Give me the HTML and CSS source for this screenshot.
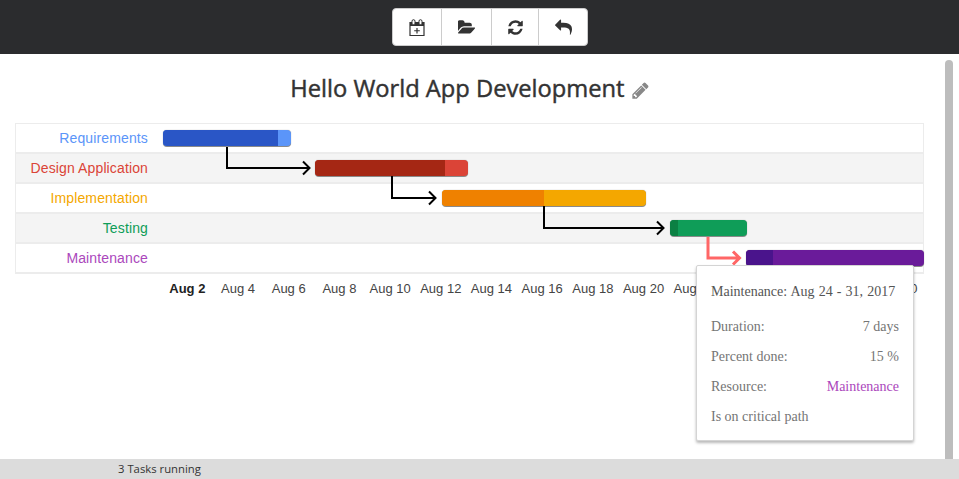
FILE: index.html
```html
<!DOCTYPE html>
<html lang="en">
<head>
<meta charset="utf-8">
<title>Hello World App Development</title>
<link rel="stylesheet" href="styles.css">
</head>
<body>
<header class="toolbar">
  <div class="btn-group">
    <button class="btn btn-a" aria-label="New task">
      <svg class="ico" width="16" height="17" viewBox="0 0 16 17"><path class="cal" d="M1 3.500h14v13h-14z M8 9v5.500 M5.200 11.750h5.600"/><path d="M1 4h14v3h-14z"/><rect class="ring" x="3" y=".7" width="3" height="5" rx="1.500"/><rect class="ring" x="10" y=".7" width="3" height="5" rx="1.500"/></svg>
    </button>
    <button class="btn btn-b" aria-label="Open">
      <svg class="ico" width="18" height="17" viewBox="0 0 1920 1792"><path d="M1815 952q0 31-31 66l-336 396q-43 51-120.500 86.500t-143.500 35.500h-1088q-34 0-60.500-13t-26.500-43q0-31 31-66l336-396q43-51 120.500-86.500t143.500-35.500h1088q34 0 60.500 13t26.500 43zm-343-344v160h-832q-94 0-197 47.500t-164 119.500l-337 396-5 6q0-4-.5-12.500t-.5-12.500v-960q0-92 66-158t158-66h320q92 0 158 66t66 158v32h544q92 0 158 66t66 158z"/></svg>
    </button>
    <button class="btn btn-c" aria-label="Refresh">
      <svg class="ico" width="17" height="17" viewBox="0 0 1792 1792"><path d="M1639 1056q0 5-1 7-64 268-268 434.500t-478 166.500q-146 0-282.500-55t-243.500-157l-129 129q-19 19-45 19t-45-19-19-45v-448q0-26 19-45t45-19h448q26 0 45 19t19 45-19 45l-137 137q71 66 161 102t187 36q134 0 250-65t186-179q11-17 53-117 8-23 30-23h192q13 0 22.500 9.500t9.500 22.500zm25-800v448q0 26-19 45t-45 19h-448q-26 0-45-19t-19-45 19-45l138-138q-148-137-349-137-134 0-250 65t-186 179q-11 17-53 117-8 23-30 23h-199q-13 0-22.500-9.500t-9.500-22.500v-7q65-268 270-434.500t480-166.500q146 0 284 55.500t245 156.500l130-129q19-19 45-19t45 19 19 45z"/></svg>
    </button>
    <button class="btn btn-d" aria-label="Undo">
      <svg class="ico" width="17" height="17" viewBox="0 0 1792 1792"><path d="M1792 1120q0 166-127 451-3 7-10.500 24t-13.500 30-13 22q-12 17-28 17-15 0-23.500-10t-8.500-25q0-9 2.500-26.500t2.500-23.500q5-68 5-123 0-101-17.500-181t-48.500-138.500-80-101-105.500-69.500-133-42.500-154-21.500-175.500-6h-224v256q0 26-19 45t-45 19-45-19l-512-512q-19-19-19-45t19-45l512-512q19-19 45-19t45 19 19 45v256h224q713 0 875 403 53 134 53 333z"/></svg>
    </button>
  </div>
</header>

<main class="content">
  <h1 class="title">Hello World App Development
    <svg class="pencil" width="19" height="19" viewBox="0 0 1792 1792"><path d="M491 1536l91-91-235-235-91 91v107h128v128h107zm523-928q0-22-22-22-10 0-17 7l-542 542q-7 7-7 17 0 22 22 22 10 0 17-7l542-542q7-7 7-17zm-54-192l416 416-832 832h-416v-416zm683 96q0 53-37 90l-166 166-416-416 166-165q36-38 90-38 53 0 91 38l235 234q37 39 37 91z"/></svg>
  </h1>

  <section class="gantt">
    <div class="rows">
      <div class="row"><span class="label c-blue">Requirements</span></div>
      <div class="row alt"><span class="label c-red">Design Application</span></div>
      <div class="row"><span class="label c-orange">Implementation</span></div>
      <div class="row alt"><span class="label c-green">Testing</span></div>
      <div class="row"><span class="label c-purple">Maintenance</span></div>
    </div>
    <div class="axis">
      <span class="tick strong">Aug 2</span><span class="tick">Aug 4</span><span class="tick">Aug 6</span><span class="tick">Aug 8</span><span class="tick">Aug 10</span><span class="tick">Aug 12</span><span class="tick">Aug 14</span><span class="tick">Aug 16</span><span class="tick">Aug 18</span><span class="tick">Aug 20</span><span class="tick">Aug 22</span><span class="tick">Aug 24</span><span class="tick">Aug 26</span><span class="tick">Aug 28</span><span class="tick">Aug 30</span>
    </div>

    <div class="bar bar-req"><div class="fill"></div></div>
    <div class="bar bar-des"><div class="fill"></div></div>
    <div class="bar bar-imp"><div class="fill"></div></div>
    <div class="bar bar-tst"><div class="fill"></div></div>
    <div class="bar bar-mnt"><div class="fill"></div></div>

    <svg class="links" width="909" height="150" viewBox="15 123 909 150">
      <path class="link" d="M227 147V168H309M303 161.500L309.500 168L303 174.500"/>
      <path class="link" d="M392 176V198H435M429 191.500L435.500 198L429 204.500"/>
      <path class="link" d="M544 206V228H663M657 221.500L663.500 228L657 234.500"/>
      <path class="link hot" d="M708 237V258H739M733 251.500L739.500 258L733 264.500"/>
    </svg>
  </section>

  <aside class="tooltip">
    <div class="tip-title">Maintenance: Aug 24 - 31, 2017</div>
    <div class="tip-row"><span>Duration:</span><span>7 days</span></div>
    <div class="tip-row"><span>Percent done:</span><span>15 %</span></div>
    <div class="tip-row"><span>Resource:</span><span class="c-purple">Maintenance</span></div>
    <div class="tip-row"><span>Is on critical path</span></div>
  </aside>

  <div class="scrollbar"></div>
</main>

<footer class="status"><span>3 Tasks running</span></footer>
</body>
</html>
```
FILE: styles.css
```css
* { box-sizing: border-box; }
html, body { height: 100%; }
body {
  margin: 0;
  display: flex;
  flex-direction: column;
  overflow: hidden;
  background: #fff;
  font-family: "Liberation Sans", Arial, sans-serif;
}
.toolbar {
  height: 54px;
  flex: none;
  background: #2b2c2e;
  display: flex;
  justify-content: center;
  padding: 8px 0 0 21px;
}
.btn-group {
  display: flex;
  height: 38px;
  background: #fff;
  border: 1px solid #ccc;
  border-radius: 4px;
}
.btn {
  display: flex;
  align-items: center;
  justify-content: center;
  padding: 0;
  border: 0;
  border-right: 1px solid #ccc;
  background: transparent;
  height: 36px;
}
.btn:last-child { border-right: 0; }
.btn-a { width: 49px; }
.btn-b { width: 50px; }
.btn-c { width: 47px; }
.btn-d { width: 48px; }
.ico { fill: #333; display: block; }
.cal { fill: none; stroke: #333; stroke-width: 1.200; }
.ring { fill: #fff; stroke: #333; stroke-width: 1; }
.content {
  flex: 1;
  position: relative;
  padding: 0 35px 0 15px;
  min-height: 0;
}
.title {
  margin: 0;
  height: 69px;
  padding: 20px 0 0 0;
  text-align: center;
  font-family: "Open Sans", sans-serif;
  font-size: 23.700px;
  font-weight: 500;
  -webkit-text-stroke: .45px #333;
  line-height: 28px;
  color: #333;
  width: 910px;
}
.pencil { fill: #888; vertical-align: -3px; -webkit-text-stroke: 0; }
.gantt {
  position: relative;
  width: 909px;
}
.rows { border-top: 1px solid #ececec; border-left: 1px solid #ececec; border-right: 1px solid #ececec; }
.row {
  height: 30px;
  border-bottom: 2px solid #ececec;
  display: flex;
  align-items: center;
}
.row.alt { background: #f4f4f4; }
.label {
  width: 132px;
  text-align: right;
  font-size: 14px;
  letter-spacing: .13px;
}
.c-blue { color: #5b95f9; }
.c-red { color: #db4437; }
.c-orange { color: #f4a700; }
.c-green { color: #0f9d58; }
.c-purple { color: #ab47bc; }
.axis {
  display: flex;
  padding-left: 147px;
  margin-top: 8px;
}
.tick {
  flex: 0 0 50.700px;
  text-align: center;
  font-size: 13px;
  line-height: 14px;
  color: #444;
  white-space: nowrap;
}
.strong { font-weight: 700; color: #222; }
.bar {
  position: absolute;
  height: 16px;
  border-radius: 4px;
  overflow: hidden;
  box-shadow: 0 1px 0 #8a8a8a, 0 0 1px #8a8a8a;
}
.fill { height: 100%; }
.bar-req { left: 148px; top: 7px; width: 128px; background: #5b95f9; }
.bar-req .fill { width: 115px; background: #2a56c6; }
.bar-des { left: 300px; top: 37px; width: 153px; background: #db4437; }
.bar-des .fill { width: 130px; background: #a52714; }
.bar-imp { left: 427px; top: 67px; width: 204px; background: #f4a700; }
.bar-imp .fill { width: 102px; background: #ef8100; }
.bar-tst { left: 655px; top: 97px; width: 77px; background: #0f9d58; }
.bar-tst .fill { width: 8px; background: #0b8043; }
.bar-mnt { left: 731px; top: 127px; width: 178px; background: #6a1b9a; }
.bar-mnt .fill { width: 27px; background: #4a148c; }
.links { position: absolute; left: 0; top: 0; overflow: visible; pointer-events: none; }
.link { fill: none; stroke: #000; stroke-width: 2; }
.link.hot { stroke: #ff6666; stroke-width: 3; }
.tooltip {
  position: absolute;
  left: 696px;
  top: 211px;
  width: 218px;
  height: 176px;
  padding: 18px 14px 0;
  background: #fff;
  border: 1px solid #d4d4d4;
  border-radius: 2px;
  box-shadow: 0 2px 3px rgba(0, 0, 0, .28);
  font-family: "Liberation Serif", "Times New Roman", serif;
  font-size: 14px;
  color: #757575;
}
.tip-title { line-height: 16px; color: #555; margin-bottom: 12px; white-space: nowrap; word-spacing: .6px; }
.tip-row {
  display: flex;
  justify-content: space-between;
  height: 30px;
  line-height: 30px;
}
.scrollbar {
  position: absolute;
  left: 945px;
  top: 6px;
  bottom: 0;
  width: 8px;
  background: #bdbdbd;
  border-radius: 4px 4px 0 0;
}
.status {
  flex: none;
  height: 20px;
  background: #dcdcdc;
  padding-left: 118px;
  font-family: "Open Sans", sans-serif;
  font-size: 11.300px;
  line-height: 20px;
  color: #333;
}
```
